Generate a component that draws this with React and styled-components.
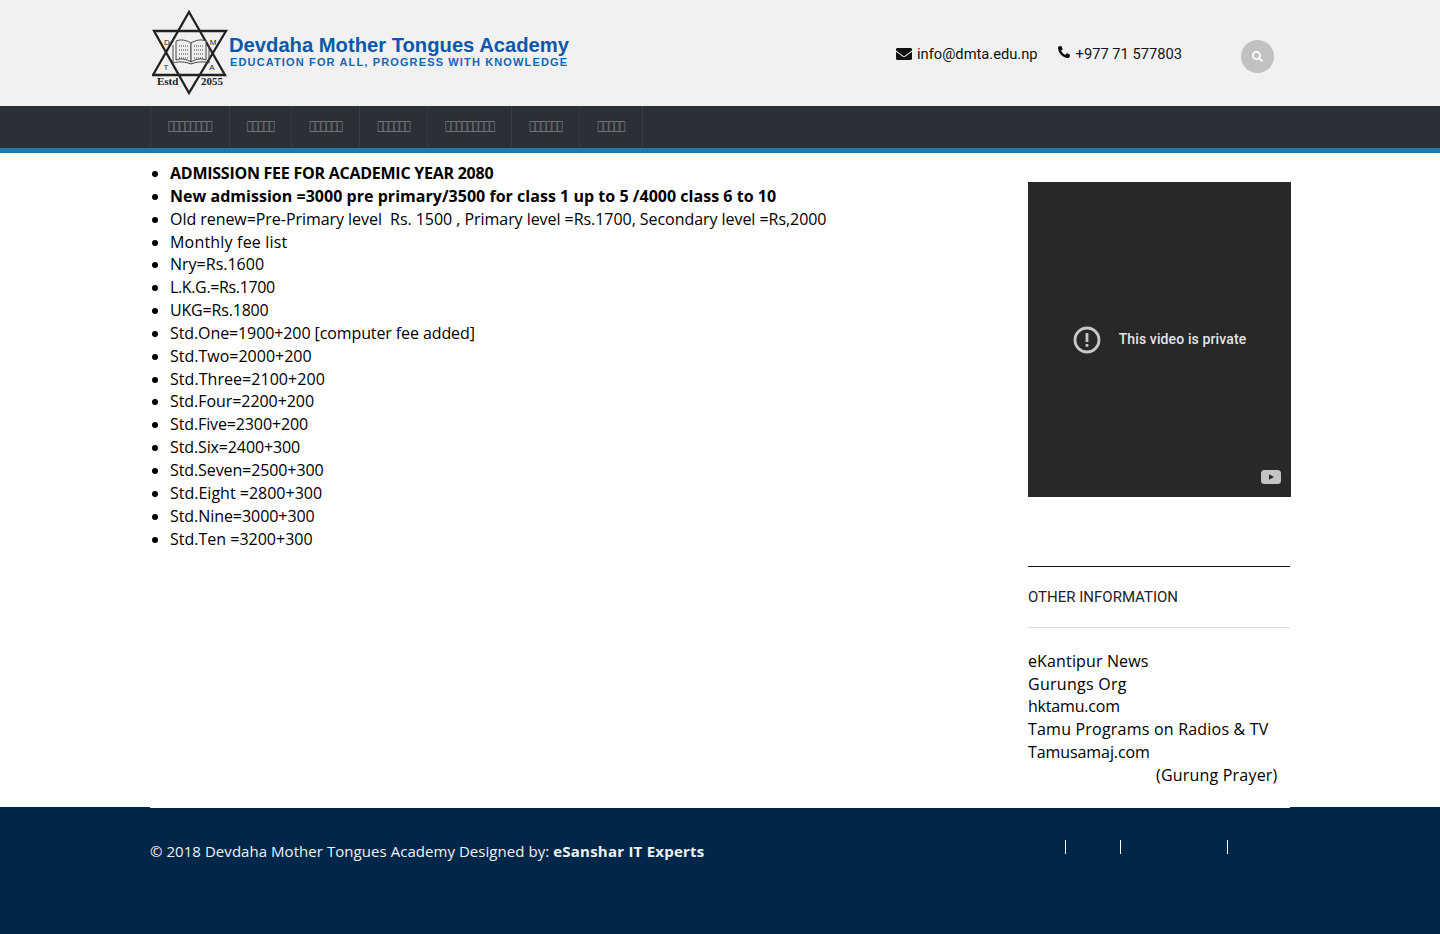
import React from 'react';
import styled, { createGlobalStyle } from 'styled-components';
import { FaEnvelope, FaPhoneAlt, FaSearch } from 'react-icons/fa';

// the labels come out as empty boxes in the reference, one per character
const box = (count) => '\uE000'.repeat(count);
const menu = [box(8), box(5), box(6), box(6), box(9), box(6), box(5)];

const fees = [
  { text: 'Old renew=Pre-Primary level  Rs. 1500 , Primary level =Rs.1700, Secondary level =Rs,2000', track: -0.05 },
  { text: 'Monthly fee list', track: 0.19 },
  { text: 'Nry=Rs.1600' },
  { text: 'L.K.G.=Rs.1700', track: -0.36 },
  { text: 'UKG=Rs.1800', track: -0.18 },
  { text: 'Std.One=1900+200 [computer fee added]', track: -0.1 },
  { text: 'Std.Two=2000+200' },
  { text: 'Std.Three=2100+200', track: 0.05 },
  { text: 'Std.Four=2200+200', track: -0.06 },
  { text: 'Std.Five=2300+200', track: -0.12 },
  { text: 'Std.Six=2400+300', track: -0.12 },
  { text: 'Std.Seven=2500+300', track: -0.1 },
  { text: 'Std.Eight =2800+300' },
  { text: 'Std.Nine=3000+300', track: -0.06 },
  { text: 'Std.Ten =3200+300' },
];

const links = [
  { text: 'eKantipur News', track: 0.14 },
  { text: 'Gurungs Org', track: 0.27 },
  { text: 'hktamu.com', track: -0.2 },
  { text: 'Tamu Programs on Radios & TV', track: 0.21 },
  { text: 'Tamusamaj.com', track: -0.08 },
];

function Logo() {
  return (
    <LogoSvg viewBox="0 0 440 90" width="440" height="90">
      <g fill="none" stroke="#222" strokeWidth="2.3">
        <polygon points="37,2 73,65 1,65" />
        <polygon points="2,21 74,21 37,83" />
      </g>
      <g fill="#eee" stroke="#444" strokeWidth="1">
        <path d="M24 31c5-2 10-1 15 2v19c-5-3-10-4-15-2z" />
        <path d="M54 31c-5-2-10-1-15 2v19c5-3 10-4 15-2z" />
        <path d="M21 35v18c6-2 13-1 18 1 5-2 12-3 18-1V35" fill="none" />
        <path d="M27 36h9M27 40h9M27 44h9M27 48h9M42 36h9M42 40h9M42 44h9M42 48h9" strokeDasharray="1 1" fill="none" />
      </g>
      <g fontFamily="'Liberation Sans', sans-serif" fontSize="8" fill="#222" textAnchor="middle">
        <text x="15" y="35">D</text>
        <text x="61" y="35">M</text>
        <text x="14" y="60">T</text>
        <text x="60" y="60">A</text>
      </g>
      <g fontFamily="'Liberation Serif', serif" fontSize="11" fontWeight="700" fill="#222">
        <text x="5" y="75">Estd</text>
        <text x="49" y="75">2055</text>
      </g>
      <text x="77" y="42" fontFamily="'Liberation Sans', sans-serif" fontWeight="700" fontSize="21" fill="#0b57ab" textLength="340" lengthAdjust="spacingAndGlyphs">
        Devdaha Mother Tongues Academy
      </text>
      <text x="78" y="56" fontFamily="'Liberation Sans', sans-serif" fontWeight="700" fontSize="11" fill="#1565b5" textLength="337" lengthAdjust="spacing">
        EDUCATION FOR ALL, PROGRESS WITH KNOWLEDGE
      </text>
    </LogoSvg>
  );
}

function PrivateVideo() {
  return (
    <Video>
      <VideoNotice>
        <svg width="28" height="28" viewBox="0 0 28 28">
          <circle cx="14" cy="14" r="12" fill="none" stroke="#c8c8c8" strokeWidth="2.8" />
          <rect x="12.6" y="7" width="2.8" height="9" fill="#c8c8c8" />
          <rect x="12.6" y="18" width="2.8" height="2.8" fill="#c8c8c8" />
        </svg>
        <span>This video is private</span>
      </VideoNotice>
      <YoutubeMark width="20" height="14" viewBox="0 0 20 14">
        <rect width="20" height="14" rx="3.5" fill="#c4c4c4" />
        <path d="M8 4.2 13 7l-5 2.8z" fill="#282828" />
      </YoutubeMark>
    </Video>
  );
}

export default function App() {
  return (
    <>
      <GlobalStyle />
      <Header>
        <HeaderInner>
          <Logo />
          <Contact>
            <ContactItem><FaEnvelope size={16} />info@dmta.edu.np</ContactItem>
            <ContactItem $gap={6}><PhoneIcon size={12} />+977 71 577803</ContactItem>
          </Contact>
          <SearchButton><FaSearch size={11} /></SearchButton>
        </HeaderInner>
      </Header>
      <Nav>
        <NavList>
          {menu.map((item, index) => (
            <NavItem key={index}>{item}</NavItem>
          ))}
        </NavList>
      </Nav>
      <Main>
        <Content>
          <FeeList>
            <Strong $track={-0.25}>ADMISSION FEE FOR ACADEMIC YEAR 2080</Strong>
            <Strong $track={0.03}>New admission =3000 pre primary/3500 for class 1 up to 5 /4000 class 6 to 10</Strong>
            {fees.map(({ text, track }) => (
              <FeeItem key={text} $track={track}>{text}</FeeItem>
            ))}
          </FeeList>
        </Content>
        <Sidebar>
          <PrivateVideo />
          <WidgetTitle>OTHER INFORMATION</WidgetTitle>
          <LinkList>
            {links.map(({ text, track }) => (
              <LinkRow key={text} $track={track}>{text}</LinkRow>
            ))}
            <PrayerLink>(Gurung Prayer)</PrayerLink>
          </LinkList>
        </Sidebar>
      </Main>
      <Footer>
        <FooterInner>
          <Copy>
            © 2018 Devdaha Mother Tongues Academy Designed by: <b>eSanshar IT Experts</b>
          </Copy>
          <FooterLinks>
            <FooterLink $width={55} />
            <FooterLink $width={107} />
            <FooterLink $width={63} />
          </FooterLinks>
        </FooterInner>
      </Footer>
    </>
  );
}

const GlobalStyle = createGlobalStyle`
  * { box-sizing: border-box; }
  html, body { margin: 0; padding: 0; background: #fff; }
  body {
    font-family: 'Open Sans', sans-serif;
    font-size: 16px;
    line-height: 22.84px;
    color: #000;
  }
`;

const Header = styled.header`
  height: 106px;
  background: #f1f1f1;
`;

const HeaderInner = styled.div`
  width: 1140px;
  height: 100%;
  margin: 0 auto;
  display: flex;
  align-items: flex-start;
`;

const LogoSvg = styled.svg`
  display: block;
  margin: 10px 0 0 2px;
  flex: none;
`;

const Contact = styled.div`
  display: flex;
  gap: 20px;
  width: 345px;
  margin: 43px 0 0 304px;
  font-family: Roboto, sans-serif;
  font-size: 14.7px;
  line-height: 22px;
  color: #111;
`;

const ContactItem = styled.div`
  display: flex;
  align-items: center;
  gap: ${({ $gap }) => $gap || 5}px;
  white-space: nowrap;
`;

const PhoneIcon = styled(FaPhoneAlt)`
  margin-top: -4px;
`;

const SearchButton = styled.div`
  width: 33px;
  height: 33px;
  margin: 40px 0 0 0;
  border-radius: 50%;
  background: #c1c1c1;
  color: #fff;
  display: flex;
  align-items: center;
  justify-content: center;
  flex: none;
`;

const Nav = styled.nav`
  height: 47px;
  background: #2b2f36;
  border-bottom: 5px solid #2178ab;
`;

const NavList = styled.div`
  width: 1140px;
  height: 42px;
  margin: 0 auto;
  display: flex;
  border-left: 1px solid #383c3e;
`;

const NavItem = styled.div`
  padding: 0 17px;
  border-right: 1px solid #383c3e;
  font-family: 'DejaVu Sans Condensed', 'DejaVu Sans', sans-serif;
  font-stretch: condensed;
  font-size: 12px;
  letter-spacing: -1px;
  line-height: 41px;
  color: #7d8083;
  white-space: nowrap;
`;

const Main = styled.main`
  position: relative;
  width: 1140px;
  height: 655px;
  margin: 0 auto;
  display: flex;
  justify-content: space-between;
  background: #fff;
`;

const Content = styled.div`
  width: 860px;
`;

const FeeList = styled.ul`
  margin: 9px 0 0;
  padding: 0 0 0 20px;
  white-space: pre-wrap;
`;

const FeeItem = styled.li`
  letter-spacing: ${({ $track }) => $track || 0}px;
`;

const Strong = styled(FeeItem)`
  font-weight: 700;
`;

const Sidebar = styled.aside`
  width: 262px;
  padding-top: 29px;
`;

const Video = styled.div`
  position: relative;
  width: 263px;
  height: 315px;
  background: #282828;
  display: flex;
  align-items: center;
  justify-content: center;
`;

const VideoNotice = styled.div`
  display: flex;
  align-items: center;
  gap: 18px;
  color: #e4e4e4;
  font-family: Roboto, sans-serif;
  font-size: 14px;
  font-weight: 500;
  letter-spacing: 0.12px;
  line-height: 28px;
  span {
    margin-top: -2px;
  }
`;

const YoutubeMark = styled.svg`
  position: absolute;
  right: 10px;
  bottom: 13px;
`;

const WidgetTitle = styled.h3`
  margin: 69px 0 0;
  height: 62px;
  border-top: 1px solid #111;
  border-bottom: 1px solid #ddd;
  font-family: Roboto, sans-serif;
  font-size: 15px;
  font-weight: 400;
  line-height: 60px;
  color: #222;
`;

const LinkList = styled.div`
  padding-top: 21.75px;
`;

const LinkRow = styled.div`
  letter-spacing: ${({ $track }) => $track || 0}px;
`;

const PrayerLink = styled.div`
  padding-left: 128px;
  letter-spacing: 0.2px;
`;

const Footer = styled.footer`
  height: 127px;
  margin-top: -1px;
  background: #00274a;
`;

const FooterInner = styled.div`
  width: 1140px;
  margin: 0 auto;
  display: flex;
  justify-content: space-between;
  padding-top: 33px;
`;

const Copy = styled.div`
  color: #f2f2f2;
  font-size: 15px;
  letter-spacing: 0.05px;
  b {
    letter-spacing: 0.23px;
  }
`;

const FooterLinks = styled.div`
  display: flex;
`;

const FooterLink = styled.div`
  width: ${({ $width }) => $width}px;
  height: 14px;
  border-left: 1px solid #fff;
`;
